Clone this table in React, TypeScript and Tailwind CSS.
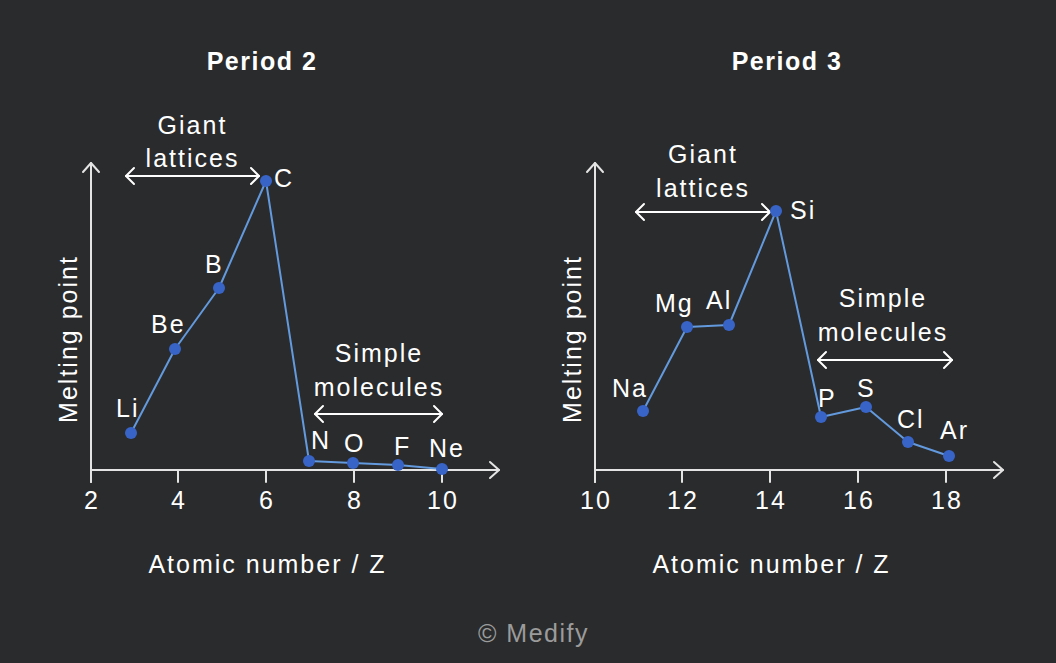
import React from "react";

type Point = { x: number; y: number; label: string; lx: number; ly: number };
type Bracket = { cx: number; top: string; bottom: string; y1: number; y2: number; ax1: number; ax2: number; ay: number };

interface ChartProps {
  left: number;
  title: string;
  titleClass: string;
  axisX: number;
  ticks: number[];
  tickLabels: string[];
  points: Point[];
  brackets: Bracket[];
}

const AXIS = "#e4e4e4";

// double-headed arrow
function Arrow({ x1, x2, y }: { x1: number; x2: number; y: number }) {
  return (
    <g stroke="#ffffff" strokeWidth={2} fill="none" strokeLinecap="round" strokeLinejoin="round">
      <line x1={x1} y1={y} x2={x2} y2={y} />
      <path d={`M ${x1 + 8} ${y - 8} L ${x1} ${y} L ${x1 + 8} ${y + 8}`} />
      <path d={`M ${x2 - 8} ${y - 8} L ${x2} ${y} L ${x2 - 8} ${y + 8}`} />
    </g>
  );
}

function Chart({ left, title, titleClass, axisX, ticks, tickLabels, points, brackets }: ChartProps) {
  const axisY = 470;
  const axisEnd = axisX + 408;

  return (
    <div className="w-[504px] flex flex-col">
      {/* タイトル */}
      <div
        className={`h-[32px] mt-[45px] text-center text-[25px] leading-[32px] font-bold tracking-[1.5px] text-white ${titleClass}`}
      >
        {title}
      </div>

      <svg width={504} height={471} className="block">
        <g transform={`translate(${-left} -77)`}>
          {/* axes */}
          <g stroke={AXIS} strokeWidth={2} fill="none" strokeLinecap="round" strokeLinejoin="round">
            <line x1={axisX} y1={axisY + 12} x2={axisX} y2={163} />
            <path d={`M ${axisX - 8} 172 L ${axisX} 163 L ${axisX + 8} 172`} />
            <line x1={axisX} y1={axisY} x2={axisEnd} y2={axisY} />
            <path d={`M ${axisEnd - 9} ${axisY - 8} L ${axisEnd} ${axisY} L ${axisEnd - 9} ${axisY + 8}`} />
            {ticks.map((t) => (
              <line key={t} x1={t} y1={axisY} x2={t} y2={axisY + 12} />
            ))}
          </g>
          {ticks.map((t, i) => (
            <text key={t} x={t + 1} y={509} textAnchor="middle" fontSize={25} letterSpacing={2} fill="#ffffff">
              {tickLabels[i]}
            </text>
          ))}

          {/* y label */}
          <text
            transform={`translate(${axisX - 14} 339) rotate(-90)`}
            textAnchor="middle"
            fontSize={25}
            letterSpacing={2}
            fill="#ffffff"
          >
            Melting point
          </text>

          {/* brackets */}
          {brackets.map((b) => (
            <g key={b.top}>
              <text x={b.cx + 1} y={b.y1} textAnchor="middle" fontSize={25} letterSpacing={2} fill="#ffffff">
                {b.top}
              </text>
              <text x={b.cx + 1} y={b.y2} textAnchor="middle" fontSize={25} letterSpacing={2} fill="#ffffff">
                {b.bottom}
              </text>
              <Arrow x1={b.ax1} x2={b.ax2} y={b.ay} />
            </g>
          ))}

          {/* data line */}
          <polyline
            points={points.map((p) => `${p.x},${p.y}`).join(" ")}
            fill="none"
            stroke="#6399dd"
            strokeWidth={2}
            strokeLinejoin="round"
          />
          {points.map((p) => (
            <circle key={p.label} cx={p.x} cy={p.y} r={6} fill="#3864c8" />
          ))}
          {points.map((p) => (
            <text key={p.label} x={p.lx - 1} y={p.ly} fontSize={25} letterSpacing={2} fill="#ffffff">
              {p.label}
            </text>
          ))}
        </g>
      </svg>

      {/* x label */}
      <div className="h-[32px] pr-[17px] text-center text-[25px] leading-[32px] tracking-[2px] text-white">
        Atomic number / Z
      </div>
    </div>
  );
}

const period2: Point[] = [
  { x: 131, y: 433, label: "Li", lx: 117, ly: 417 },
  { x: 175, y: 349, label: "Be", lx: 152, ly: 333 },
  { x: 219, y: 288, label: "B", lx: 206, ly: 273 },
  { x: 266, y: 181, label: "C", lx: 275, ly: 187 },
  { x: 309, y: 461, label: "N", lx: 312, ly: 449 },
  { x: 353, y: 463, label: "O", lx: 345, ly: 452 },
  { x: 398, y: 465, label: "F", lx: 395, ly: 455 },
  { x: 442, y: 469, label: "Ne", lx: 430, ly: 457 },
];

const period3: Point[] = [
  { x: 643, y: 411, label: "Na", lx: 613, ly: 397 },
  { x: 687, y: 327, label: "Mg", lx: 656, ly: 312 },
  { x: 729, y: 325, label: "Al", lx: 707, ly: 309 },
  { x: 776, y: 211, label: "Si", lx: 791, ly: 219 },
  { x: 821, y: 417, label: "P", lx: 819, ly: 407 },
  { x: 866, y: 407, label: "S", lx: 858, ly: 397 },
  { x: 908, y: 442, label: "Cl", lx: 898, ly: 428 },
  { x: 949, y: 456, label: "Ar", lx: 941, ly: 439 },
];

export default function App() {
  return (
    <div className="w-[1056px] h-[663px] bg-[#2a2b2d] flex flex-col overflow-hidden font-['Liberation_Sans',Arial,sans-serif]">
      <div className="flex pl-[24px]">
        <Chart
          left={24}
          title="Period 2"
          titleClass="pr-[28px]"
          axisX={91}
          ticks={[91, 178, 266, 354, 442]}
          tickLabels={["2", "4", "6", "8", "10"]}
          points={period2}
          brackets={[
            { cx: 191.5, top: "Giant", bottom: "lattices", y1: 134, y2: 167, ax1: 126, ax2: 259, ay: 176 },
            { cx: 378, top: "Simple", bottom: "molecules", y1: 362, y2: 396, ax1: 315, ax2: 442, ay: 414 },
          ]}
        />
        <Chart
          left={528}
          title="Period 3"
          titleClass="pl-[14px]"
          axisX={595}
          ticks={[595, 682, 770, 858, 946]}
          tickLabels={["10", "12", "14", "16", "18"]}
          points={period3}
          brackets={[
            { cx: 702, top: "Giant", bottom: "lattices", y1: 163, y2: 197, ax1: 636, ax2: 770, ay: 212 },
            { cx: 882, top: "Simple", bottom: "molecules", y1: 307, y2: 341, ax1: 818, ax2: 952, ay: 360 },
          ]}
        />
      </div>

      {/* フッター */}
      <div className="mt-[37px] pl-[11px] text-center text-[25px] leading-[32px] tracking-[1.5px] text-[#9b9b9b]">
        © Medify
      </div>
    </div>
  );
}
